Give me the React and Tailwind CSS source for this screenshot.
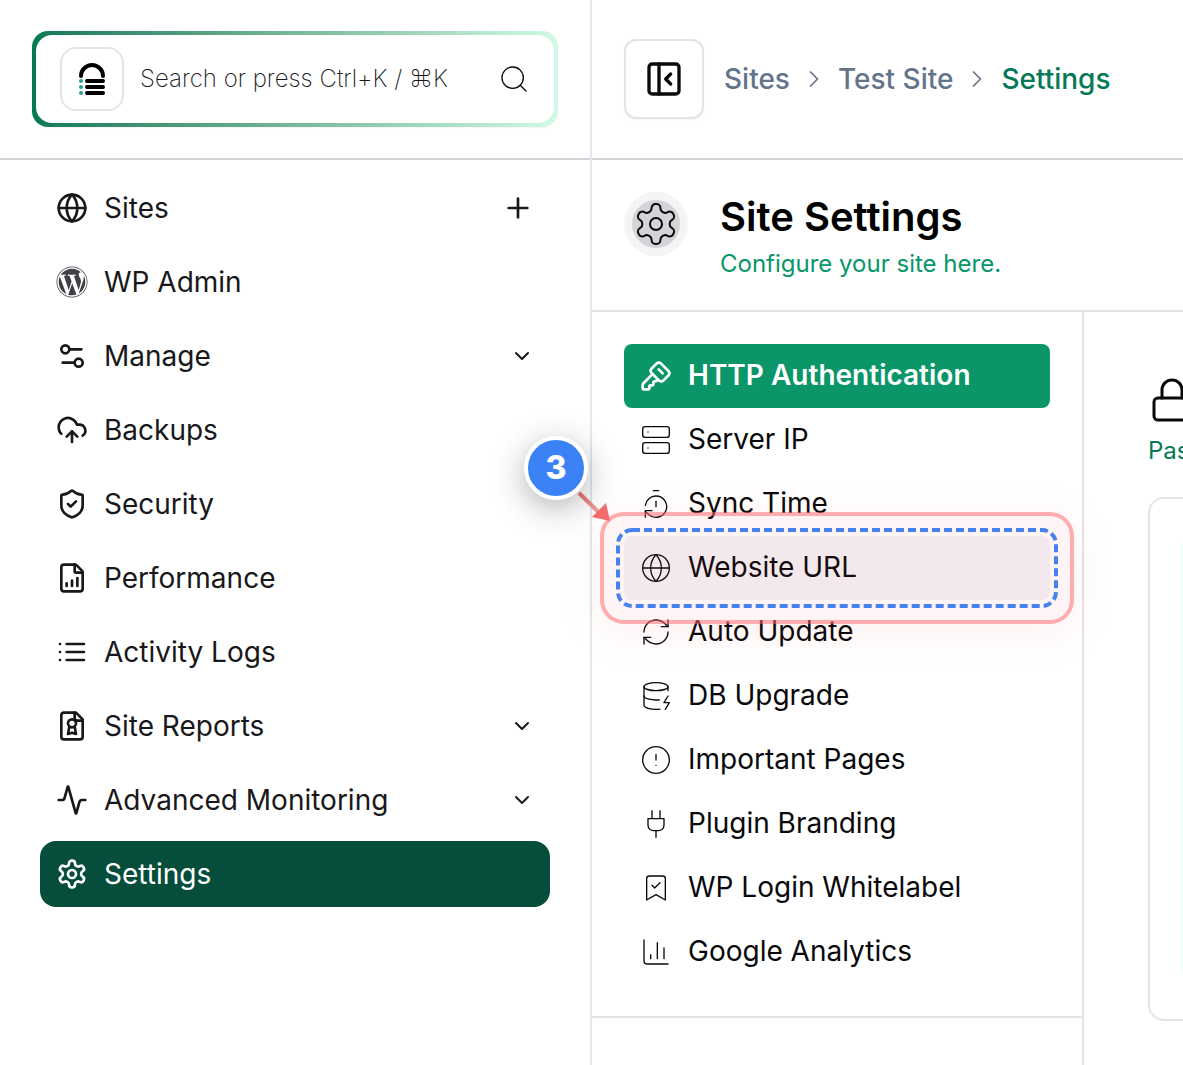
import React from "react";
import { FaWordpress } from "react-icons/fa";
import {
  Activity,
  ChartColumn,
  ChevronDown,
  ChevronRight,
  CircleAlert,
  CloudUpload,
  DatabaseZap,
  FileChartColumnIncreasing,
  Globe,
  KeySquare,
  Lock,
  PanelLeftClose,
  Plus,
  RefreshCw,
  Search,
  Server,
  Settings2,
  ShieldCheck,
  TimerReset,
} from "lucide-react";

function Icon({ className, strokeWidth = 2, children }) {
  return (
    <svg
      viewBox="0 0 24 24"
      fill="none"
      stroke="currentColor"
      strokeWidth={strokeWidth}
      strokeLinecap="round"
      strokeLinejoin="round"
      aria-hidden="true"
      className={className}
    >
      {children}
    </svg>
  );
}

function Gear(props) {
  return (
    <Icon {...props}>
      <path d="M12.22 2h-.44a2 2 0 0 0-2 2v.18a2 2 0 0 1-1 1.73l-.43.25a2 2 0 0 1-2 0l-.15-.08a2 2 0 0 0-2.73.73l-.22.38a2 2 0 0 0 .73 2.73l.15.1a2 2 0 0 1 1 1.72v.51a2 2 0 0 1-1 1.74l-.15.09a2 2 0 0 0-.73 2.73l.22.38a2 2 0 0 0 2.73.73l.15-.08a2 2 0 0 1 2 0l.43.25a2 2 0 0 1 1 1.73V20a2 2 0 0 0 2 2h.44a2 2 0 0 0 2-2v-.18a2 2 0 0 1 1-1.73l.43-.25a2 2 0 0 1 2 0l.15.08a2 2 0 0 0 2.73-.73l.22-.39a2 2 0 0 0-.73-2.73l-.15-.08a2 2 0 0 1-1-1.74v-.5a2 2 0 0 1 1-1.74l.15-.09a2 2 0 0 0 .73-2.73l-.22-.38a2 2 0 0 0-2.73-.73l-.15.08a2 2 0 0 1-2 0l-.43-.25a2 2 0 0 1-1-1.73V4a2 2 0 0 0-2-2z" />
      <circle cx="12" cy="12" r="3" />
    </Icon>
  );
}

function ListLines(props) {
  return (
    <Icon {...props}>
      <path d="M3 12h.01M3 18h.01M3 6h.01M8 12h13M8 18h13M8 6h13" />
    </Icon>
  );
}

function FileAward(props) {
  return (
    <Icon {...props}>
      <path d="M15 2H6a2 2 0 0 0-2 2v16a2 2 0 0 0 2 2h12a2 2 0 0 0 2-2V7Z" />
      <path d="M14 2v4a2 2 0 0 0 2 2h4" />
      <circle cx="12" cy="10" r="3" />
      <path d="m14 12.5 1 5.5-3-1-3 1 1-5.5" />
    </Icon>
  );
}

function PowerPlug(props) {
  return (
    <Icon {...props}>
      <path d="M12 22v-5M9 8V2M15 8V2M18 8v5a4 4 0 0 1-4 4h-4a4 4 0 0 1-4-4V8Z" />
    </Icon>
  );
}

function BookmarkTick(props) {
  return (
    <Icon {...props}>
      <path d="m19 21-7-4-7 4V5a2 2 0 0 1 2-2h10a2 2 0 0 1 2 2Z" />
      <path d="m9 10 2 2 4-4" />
    </Icon>
  );
}

function Logo() {
  return (
    <svg viewBox="0 0 26 32" className="h-8 w-[26px]" aria-hidden="true">
      <path d="M2 13a11 11 0 0 1 22 0" fill="none" stroke="#000" strokeWidth="4" strokeLinecap="round" />
      <g stroke="#000" strokeWidth="4" strokeLinecap="round">
        <path d="M8 18h16M8 24h16M8 30h16" />
      </g>
      <g fill="#2a9d8f">
        <circle cx="2" cy="18" r="2" />
        <circle cx="2" cy="24" r="2" />
        <circle cx="2" cy="30" r="2" />
      </g>
    </svg>
  );
}

const navItems = [
  { label: "Sites", icon: Globe, action: "add" },
  { label: "WP Admin", icon: FaWordpress, brand: true },
  { label: "Manage", icon: Settings2, action: "expand" },
  { label: "Backups", icon: CloudUpload },
  { label: "Security", icon: ShieldCheck },
  { label: "Performance", icon: FileChartColumnIncreasing },
  { label: "Activity Logs", icon: ListLines },
  { label: "Site Reports", icon: FileAward, action: "expand" },
  { label: "Advanced Monitoring", icon: Activity, action: "expand" },
  { label: "Settings", icon: Gear, active: true },
];

const settingItems = [
  { label: "HTTP Authentication", icon: KeySquare, active: true },
  { label: "Server IP", icon: Server },
  { label: "Sync Time", icon: TimerReset },
  { label: "Website URL", icon: Globe, marked: true },
  { label: "Auto Update", icon: RefreshCw },
  { label: "DB Upgrade", icon: DatabaseZap },
  { label: "Important Pages", icon: CircleAlert },
  { label: "Plugin Branding", icon: PowerPlug },
  { label: "WP Login Whitelabel", icon: BookmarkTick },
  { label: "Google Analytics", icon: ChartColumn },
];

function NavItem({ label, icon: Glyph, action, brand, active }) {
  return (
    <li
      className={
        active
          ? "flex h-[66px] items-center rounded-2xl bg-[#064e3b] px-4 text-white"
          : "flex h-[66px] items-center rounded-2xl px-4 text-[#18181b]"
      }
    >
      <a href="#" className="flex flex-1 items-center gap-4">
        {brand ? (
          <Glyph className="size-8 text-[#3f3f46]" />
        ) : (
          <Glyph className="size-8" strokeWidth={2} />
        )}
        <span>{label}</span>
      </a>
      {action === "add" && (
        <button type="button" aria-label="Add site">
          <Plus className="size-8" strokeWidth={2} />
        </button>
      )}
      {action === "expand" && (
        <button type="button" aria-label={"Expand " + label}>
          <ChevronDown className="size-6" strokeWidth={2} />
        </button>
      )}
    </li>
  );
}

function Sidebar() {
  return (
    <aside className="w-[592px] shrink-0 border-r-2 border-[#e2e8f0]">
      <div className="flex h-40 items-center border-b-2 border-[#d4d4d8] px-8">
        <label className="min-w-0 flex-1 rounded-2xl bg-linear-to-r from-[#047857] to-[#d1fae5] p-1 shadow-xs">
          <span className="flex h-[88px] items-center rounded-2xl bg-white px-6">
            <span className="flex size-16 shrink-0 items-center justify-center rounded-2xl border-2 border-[#e4e4e7]">
              <Logo />
            </span>
            <input
              type="text"
              aria-label="Search"
              placeholder="Search or press Ctrl+K / ⌘K"
              className="ml-4 min-w-0 flex-1 text-2xl font-extralight outline-none placeholder:text-[#18181b]"
            />
            <Search className="size-8 shrink-0" strokeWidth={1} />
          </span>
        </label>
      </div>
      <nav aria-label="Main">
        <ul className="flex flex-col gap-2 px-10 pt-[15px] text-[28px]">
          {navItems.map((item) => (
            <NavItem key={item.label} {...item} />
          ))}
        </ul>
      </nav>
    </aside>
  );
}

function StepMarker() {
  return (
    <>
      <div className="pointer-events-none absolute -inset-6 rounded-3xl border-4 border-[#ff6467]/50 bg-[#f43f5e]/6 shadow-[0_8px_48px_rgba(239,68,68,0.08)]">
        <svg className="absolute inset-3 h-[calc(100%-24px)] w-[calc(100%-24px)] overflow-visible" aria-hidden="true">
          <rect
            x="2"
            y="2"
            rx="14"
            className="h-[calc(100%-4px)] w-[calc(100%-4px)]"
            fill="none"
            stroke="#4682ee"
            strokeWidth="4"
            strokeDasharray="8 4"
          />
        </svg>
      </div>
      <svg
        viewBox="0 0 34 34"
        className="pointer-events-none absolute -top-12 -left-12 size-[34px]"
        aria-hidden="true"
      >
        <defs>
          <linearGradient id="shaft" x1="0" y1="0" x2="1" y2="1">
            <stop offset="0" stopColor="#ea6a6a" />
            <stop offset="1" stopColor="#f3a9a9" />
          </linearGradient>
        </defs>
        <path d="M1.6 6.4 4.4 3.6 24 22.6 21 25.6Z" fill="url(#shaft)" />
        <path d="M34 33 30 15 16 29Z" fill="#f56c6c" />
      </svg>
      <span className="absolute -top-[100px] -left-[100px] flex size-16 items-center justify-center rounded-full border-4 border-white bg-[#3b82f6] text-[32px] font-extrabold text-white shadow-[0_8px_32px_rgba(0,0,0,0.3)]">
        3
      </span>
    </>
  );
}

function SettingItem({ label, icon: Glyph, active, marked }) {
  return (
    <a
      href="#"
      className={
        active
          ? "flex h-16 items-center gap-4 rounded-lg bg-[#0a9669] px-4 font-semibold text-white"
          : marked
            ? "flex h-16 items-center gap-4 rounded-lg bg-zinc-100 px-4"
            : "flex h-16 items-center gap-4 rounded-lg px-4"
      }
    >
      <Glyph className="size-8 shrink-0" strokeWidth={active ? 2 : 1} />
      <span className="pb-0.5">{label}</span>
    </a>
  );
}

export default function App() {
  return (
    <div className="flex min-h-screen overflow-hidden bg-white font-[Inter,sans-serif] text-[#09090b]">
      <Sidebar />
      <main className="flex min-w-0 flex-1 flex-col">
        <header className="flex h-40 shrink-0 items-center gap-5 border-b-2 border-[#d4d4d8] px-8">
          <button
            type="button"
            aria-label="Collapse sidebar"
            className="flex size-20 shrink-0 items-center justify-center rounded-xl border-2 border-[#e4e4e7] shadow-xs"
          >
            <PanelLeftClose className="size-10" strokeWidth={2} />
          </button>
          <nav aria-label="Breadcrumb">
            <ol className="flex items-center gap-[10px] text-[28px] font-medium whitespace-nowrap text-[#64748b]">
              <li><a href="#">Sites</a></li>
              <li aria-hidden="true"><ChevronRight className="size-7" strokeWidth={1.5} /></li>
              <li><a href="#">Test Site</a></li>
              <li aria-hidden="true"><ChevronRight className="size-7" strokeWidth={1.5} /></li>
              <li className="text-[#047857]" aria-current="page">Settings</li>
            </ol>
          </nav>
        </header>

        <section className="flex gap-8 border-b-2 border-[#e4e4e7] p-8">
          <span className="flex size-16 shrink-0 items-center justify-center rounded-full border-8 border-zinc-100 bg-zinc-300">
            <Gear className="size-12 shrink-0" strokeWidth={1} />
          </span>
          <div>
            <h1 className="text-[40px] leading-[50px] font-semibold text-black">Site Settings</h1>
            <p className="mt-2 text-2xl leading-7 text-[#059669]">Configure your site here.</p>
          </div>
        </section>

        <div className="flex flex-1">
          <div className="w-[492px] shrink-0 border-r-2 border-[#e4e4e7]">
            <nav aria-label="Site settings" className="border-b-2 border-[#e4e4e7] p-8">
              <ul className="text-[28px]">
                {settingItems.map((item) => (
                  <li key={item.label} className={item.marked ? "relative z-10" : undefined}>
                    <SettingItem {...item} />
                    {item.marked && <StepMarker />}
                  </li>
                ))}
              </ul>
            </nav>
          </div>

          <section className="flex-1 pt-16 pl-16">
            <Lock className="size-12" strokeWidth={1.5} />
            <p className="mt-3 text-2xl leading-[30px] whitespace-nowrap text-[#047857]">Password</p>
            <div className="mt-[31px] w-[600px] rounded-2xl border-2 border-[#e4e4e7] px-8 py-10">
              <div className="h-[440px] rounded-lg bg-[#e6fffa]" />
            </div>
          </section>
        </div>
      </main>
    </div>
  );
}
